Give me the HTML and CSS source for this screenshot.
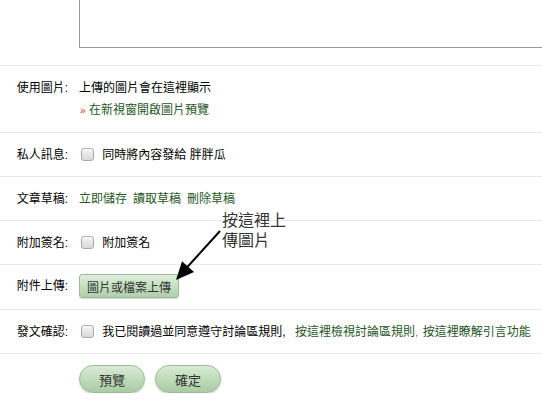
FILE: index.html
```html
<!DOCTYPE html>
<html lang="zh-Hant">
<head>
    <meta charset="UTF-8">
    <meta name="viewport" content="width=device-width, initial-scale=1.0">
    <title>發表文章</title>
    <link rel="stylesheet" href="styles.css">
</head>
<body>

<form class="post-form">
    <div class="row row-editor">
        <div class="label"></div>
        <div class="field">
            <textarea class="editor"></textarea>
        </div>
    </div>

    <div class="row row-images">
        <div class="label">使用圖片:</div>
        <div class="field">
            <div>上傳的圖片會在這裡顯示</div>
            <div><span class="raquo">»</span> <a href="#">在新視窗開啟圖片預覽</a></div>
        </div>
    </div>

    <div class="row">
        <div class="label">私人訊息:</div>
        <div class="field">
            <label class="check"><input type="checkbox"> 同時將內容發給 胖胖瓜</label>
        </div>
    </div>

    <div class="row">
        <div class="label">文章草稿:</div>
        <div class="field links">
            <a href="#">立即儲存</a><a href="#">讀取草稿</a><a href="#">刪除草稿</a>
        </div>
    </div>

    <div class="row">
        <div class="label">附加簽名:</div>
        <div class="field">
            <label class="check"><input type="checkbox"> 附加簽名</label>
        </div>
    </div>

    <div class="row row-upload">
        <div class="label">附件上傳:</div>
        <div class="field">
            <button type="button" class="upload-btn">圖片或檔案上傳</button>
        </div>
    </div>

    <div class="row">
        <div class="label">發文確認:</div>
        <div class="field">
            <label class="check"><input type="checkbox"> 我已閱讀過並同意遵守討論區規則,</label>
            <a href="#" class="rule-link">按這裡檢視討論區規則</a><span class="comma">,</span>
            <a href="#">按這裡瞭解引言功能</a>
        </div>
    </div>

    <div class="actions">
        <button type="button" class="pill">預覽</button>
        <button type="button" class="pill">確定</button>
    </div>
</form>

<!-- annotation over the form -->
<div class="note">按這裡上傳圖片</div>
<svg class="note-arrow" width="56" height="60" viewBox="0 0 56 60">
    <line x1="50" y1="6" x2="16" y2="43.5" stroke="#000" stroke-width="2"/>
    <polygon points="6,55 24,46.9 12,36.3" fill="#000"/>
</svg>

</body>
</html>
```

FILE: styles.css
```css
body {
    margin: 0;
    padding: 0;
    font-family: "Liberation Sans", "Noto Sans CJK TC", sans-serif;
    font-size: 12px;
    color: #000;
    background: #fff;
    overflow: hidden;
    position: relative;
}

a {
    color: #1f561f;
    text-decoration: none;
}

.row {
    display: grid;
    grid-template-columns: 79px 1fr;
    align-items: center;
    padding: 11px 0 10px;
    line-height: 22px;
    border-bottom: 1px solid #e8e8e8;
}

.label {
    text-align: right;
    padding-right: 11px;
    white-space: nowrap;
}

.field {
    white-space: nowrap;
    min-width: 0;
}

.row-editor {
    padding: 0 0 17px;
    align-items: end;
}

.editor {
    display: block;
    box-sizing: border-box;
    width: 100%;
    height: 148px;
    margin: -100px 0 0;
    padding: 0;
    border: 1px solid #999;
    border-right: none;
    resize: none;
    background: #fff;
}

.row-images {
    align-items: start;
}

.raquo {
    color: #c8401e;
    font-size: 10px;
    margin-left: 1px;
}

.links a {
    margin-right: 6px;
}

.check input {
    appearance: none;
    -webkit-appearance: none;
    width: 13px;
    height: 13px;
    margin: 0 5px 0 2px;
    vertical-align: -2px;
    border: 1px solid #a9a9a9;
    border-radius: 3px;
    background: linear-gradient(to bottom, #f4f4f4, #dadada);
    box-shadow: inset 0 1px 0 #fff;
}

.rule-link {
    margin-left: 6px;
}

.comma {
    color: #a07090;
    margin-right: 1px;
}

.row-upload {
    padding: 9px 0 11px;
}

.upload-btn {
    display: block;
    width: 100px;
    height: 24px;
    padding: 0;
    font-family: inherit;
    font-size: 12px;
    color: #333;
    border: 1px solid #9cba97;
    border-radius: 3px;
    background: linear-gradient(to bottom, #deefdb, #afcfaa);
    box-shadow: 0 1px 1px rgba(0, 0, 0, 0.15);
}

.actions {
    display: flex;
    gap: 10px;
    padding: 11px 0 0 79px;
}

.pill {
    width: 66px;
    height: 28px;
    padding: 0;
    font-family: inherit;
    font-size: 13px;
    color: #333;
    border: 1px solid #9cba97;
    border-radius: 14px;
    background: linear-gradient(to bottom, #d8ecd4, #a9cba3);
    box-shadow: 0 1px 2px rgba(0, 0, 0, 0.2);
}

.note {
    position: absolute;
    left: 222px;
    top: 211px;
    width: 66px;
    font-size: 16px;
    line-height: 20px;
    color: #333;
}

.note-arrow {
    position: absolute;
    left: 170px;
    top: 225px;
}
```
